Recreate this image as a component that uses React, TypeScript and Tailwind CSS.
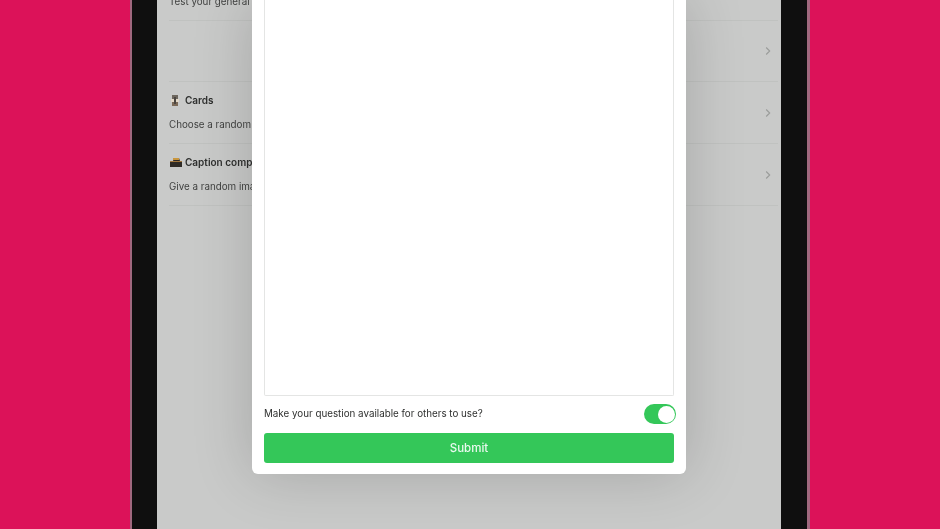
const font = { fontFamily: '"Inter", "Liberation Sans", sans-serif' };

function Chevron() {
  return (
    <svg width="6" height="10" viewBox="0 0 6 10" fill="none" className="shrink-0">
      <path d="M1.2 1.5 L4.7 5 L1.2 8.5" stroke="#9a9c9a" strokeWidth="1.1" />
    </svg>
  );
}

function CardsIcon() {
  return (
    <svg width="12" height="13" viewBox="0 0 12 13" className="shrink-0">
      <rect x="3" y="1" width="6" height="4" fill="#6d675e" />
      <rect x="2" y="5" width="8" height="3" fill="#e2d8c8" />
      <rect x="3" y="8" width="6" height="4" fill="#7b6a58" />
      <rect x="5" y="3" width="2" height="7" fill="#4a4540" />
    </svg>
  );
}

function CameraIcon() {
  return (
    <svg width="14" height="12" viewBox="0 0 14 12" className="shrink-0">
      <path d="M1 5 H4 L5 2 H10 L11 5 H13 V11 H1 Z" fill="#2f2b26" />
      <rect x="4" y="2" width="6" height="2" fill="#c9973f" />
      <rect x="1" y="5" width="12" height="1" fill="#a3763a" />
    </svg>
  );
}

function Row({ icon, title, desc, gap }: { icon: React.ReactNode; title: string; desc: string; gap: string }) {
  return (
    <div className="flex h-[62px] items-center justify-between border-b border-[#c0c2c0] pr-[7px]">
      <div className="flex flex-col gap-[11px] self-start pt-[11px]">
        <div className={`flex h-[14px] items-center text-[10px] leading-[14px] font-semibold text-[#2f302f] ${gap}`}>
          {icon}
          <span>{title}</span>
        </div>
        <div className="h-[14px] text-[9.8px] leading-[14px] text-[#3f403f]">{desc}</div>
      </div>
      <Chevron />
    </div>
  );
}

export default function App() {
  return (
    <div className="flex h-[529px] w-[940px] justify-center overflow-hidden bg-[#dc1259]" style={font}>
      <div className="flex h-full w-[680px] bg-[#0f0f0f] pl-[27px] pr-[29px] shadow-[inset_2px_0_0_#a0687e,inset_-3px_0_0_#a0687e]">
        <div className="relative h-full w-[624px] bg-[#c9cac9] pl-[12px] pr-[3px] blur-[0.5px]">
          <div className="flex h-[21px] flex-col justify-end border-b border-[#c0c2c0]">
            <div className="mb-[11px] text-[9.8px] leading-[14px] text-[#3f403f]">Test your general knowledge</div>
          </div>
          <div className="flex h-[61px] items-center justify-end border-b border-[#c0c2c0] pr-[7px]">
            <Chevron />
          </div>
          <Row icon={<CardsIcon />} title="Cards" desc="Choose a random card" gap="gap-[4px]" />
          <Row icon={<CameraIcon />} title="Caption competition" desc="Give a random image a caption" gap="gap-[2px]" />

          <div className="absolute left-[95px] top-0 flex h-[474px] w-[434px] flex-col rounded-b-[6px] bg-white px-[12px] shadow-[0_0_60px_rgba(0,0,0,0.18)]">
            <div className="h-[396px] rounded-b-[2px] border border-t-0 border-[#e4e5e4] bg-white" />
            <div className="mt-[8px] flex h-[20px] items-center justify-between">
              <span className="text-[9.8px] leading-[14px] text-[#2f302f]">Make your question available for others to use?</span>
              <div className="-mr-[2px] flex h-[20px] w-[32px] items-center justify-end rounded-full bg-[#34c759] pr-[1px]">
                <div className="h-[17px] w-[17px] rounded-full bg-white" />
              </div>
            </div>
            <button className="mt-[9px] h-[30px] w-full rounded-[3px] bg-[#34c759] pt-[1px] text-[11.5px] font-medium text-[#e9f9ee]">
              Submit
            </button>
          </div>
        </div>
      </div>
    </div>
  );
}
